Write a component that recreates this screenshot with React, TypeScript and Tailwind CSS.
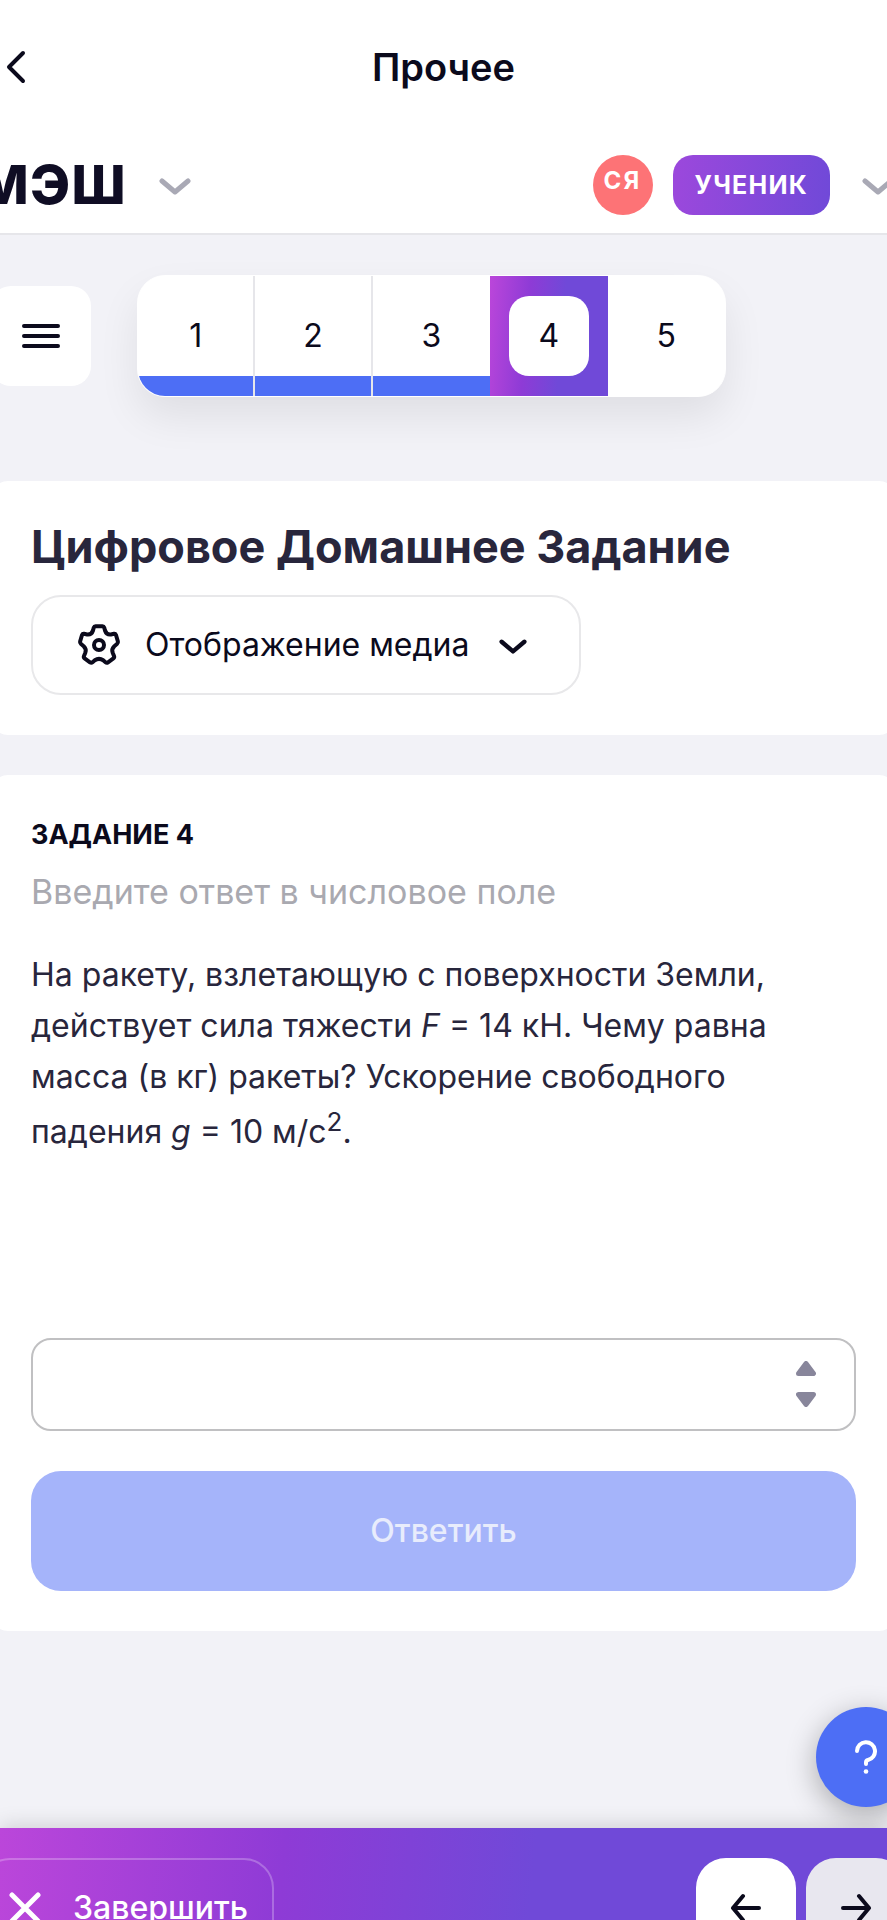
import React from "react"
import { clsx } from "clsx"

interface IconProps {
  className?: string
}

function ChevronDown({ className }: IconProps) {
  return (
    <svg viewBox="0 0 32 18" fill="none" className={className} aria-hidden="true">
      <path d="M3 3L16 14L29 3" stroke="currentColor" strokeWidth="5" strokeLinecap="round" strokeLinejoin="round" />
    </svg>
  )
}

function GearIcon({ className }: IconProps) {
  return (
    <svg viewBox="-22 -22 44 44" fill="none" stroke="currentColor" strokeLinejoin="round" className={className} aria-hidden="true">
      <path
        strokeWidth="4"
        d="M-3.500 -18.800H3.500Q4.800 -18.800 5.200 -17.500L6 -14.500Q7.500 -10 11.800 -10.500L15 -11.200Q16.400 -11.400 17 -10L18.900 -3.500Q19.200 -2 18.200 -1.200L15.300 1.200Q12.300 4 13.700 7.800L15 11Q15.600 12.400 14.400 13.300L9 17.300Q7.700 18.200 6.500 17.200L4.200 15.200Q0 12.500 -4.200 15.200L-6.500 17.200Q-7.700 18.200 -9 17.300L-14.400 13.300Q-15.600 12.400 -15 11L-13.700 7.800Q-12.300 4 -15.300 1.200L-18.200 -1.200Q-19.200 -2 -18.900 -3.500L-17 -10Q-16.400 -11.400 -15 -11.200L-11.800 -10.500Q-7.500 -10 -6 -14.500L-5.200 -17.500Q-4.800 -18.800 -3.500 -18.800Z"
      />
      <circle r="5" strokeWidth="4" />
    </svg>
  )
}

function ArrowIcon({ className }: IconProps) {
  return (
    <svg viewBox="0 0 32 30" fill="none" className={className} aria-hidden="true">
      <path d="M29 15H3M13 3L3 15L13 27" stroke="currentColor" strokeWidth="4" strokeLinecap="round" strokeLinejoin="round" />
    </svg>
  )
}

function StepIcon({ className }: IconProps) {
  return (
    <svg viewBox="0 0 20 15" className={className} aria-hidden="true">
      <path d="M10 2.500L17.500 12.500H2.500Z" fill="currentColor" stroke="currentColor" strokeWidth="5" strokeLinejoin="round" />
    </svg>
  )
}

function TopBar() {
  return (
    <div className="flex h-[133px] shrink-0 items-center bg-white">
      <button type="button" aria-label="Назад" className="flex w-8 justify-center">
        <svg viewBox="0 0 20 34" fill="none" className="h-[34px] w-5" aria-hidden="true">
          <path d="M17 3L3 17L17 31" stroke="currentColor" strokeWidth="4" strokeLinecap="round" strokeLinejoin="round" />
        </svg>
      </button>
      <h1 className="flex-1 text-center text-[38px] leading-[48px] font-semibold">Прочее</h1>
      <div className="w-8" />
    </div>
  )
}

function Header() {
  return (
    <header className="flex h-[102px] shrink-0 items-center justify-between border-b-2 border-[#e6e6ea] bg-white pt-1">
      <div className="flex items-center gap-8">
        <a
          href="#"
          className="flex w-[127px] justify-end text-[54px] leading-[60px] font-extrabold tracking-wide text-[#0f0d24]"
        >
          МЭШ
        </a>
        <button type="button" aria-label="Выбрать раздел" className="pt-1 text-[#a9a9b5]">
          <ChevronDown className="h-[18px] w-8" />
        </button>
      </div>
      <div className="-mr-2 flex items-center gap-5">
        <span className="flex size-[60px] justify-center rounded-full bg-[#fd7376] pt-2 text-2xl leading-9 font-bold tracking-widest text-white">
          СЯ
        </span>
        <span className="rounded-[20px] bg-linear-[95deg,#9c48dc,#7049d8] px-[22px] text-[25px] leading-[60px] font-bold tracking-wider text-white">
          УЧЕНИК
        </span>
        <button type="button" aria-label="Меню профиля" className="ml-3 pt-1 pr-px text-[#a9a9b5]">
          <ChevronDown className="h-[18px] w-8" />
        </button>
      </div>
    </header>
  )
}

const tasks = [
  { id: 1, done: true },
  { id: 2, done: true },
  { id: 3, done: true },
  { id: 4, done: false },
  { id: 5, done: false },
]

function TaskNav({ current }: { current: number }) {
  return (
    <div className="flex items-center gap-[46px] pt-10">
      <button
        type="button"
        aria-label="Список заданий"
        className="-ml-[9px] flex size-[100px] items-center justify-center rounded-[20px] bg-white"
      >
        <svg viewBox="0 0 38 26" fill="none" className="h-[26px] w-[38px]" aria-hidden="true">
          <path d="M2 3H36M2 13H36M2 23H36" stroke="#0b0a1c" strokeWidth="4" strokeLinecap="round" />
        </svg>
      </button>
      <nav className="grid w-[589px] grid-cols-5 overflow-hidden rounded-[28px] border border-white bg-white shadow-[0_20px_40px_rgba(0,0,0,0.08)]">
        {tasks.map(({ id, done }) => (
          <a
            key={id}
            href={`#task-${id}`}
            aria-current={id === current ? "step" : undefined}
            className={clsx(
              "flex h-[120px] flex-col text-center text-[32px] leading-[120px]",
              id === current && "items-center justify-center bg-linear-[95deg,#bb46da,#8e3bd6_32%,#7049d8_60%]",
              id < current - 1 && "border-r-2 border-[#e6e6ea]"
            )}
          >
            {id === current ? <span className="size-20 rounded-[20px] bg-white leading-20">{id}</span> : id}
            {done && <span className="-mt-5 h-5 bg-[#4d6ef5]" />}
          </a>
        ))}
      </nav>
    </div>
  )
}

function Card({ className, children }: React.PropsWithChildren & IconProps) {
  return <section className={clsx(className, "-mx-2 rounded-2xl bg-white px-[39px] py-10")}>{children}</section>
}

function AnswerForm() {
  return (
    <form className="mt-[181px]">
      <div className="flex h-[93px] items-center rounded-[20px] border-2 border-[#c0c0c2] pr-[38px]">
        <label htmlFor="answer" className="sr-only">
          Ответ
        </label>
        <input
          id="answer"
          type="text"
          inputMode="decimal"
          className="h-full min-w-0 flex-1 rounded-[20px] bg-transparent px-6 text-[32px] outline-none"
        />
        <div className="flex flex-col gap-4 text-[#88869b]">
          <button type="button" aria-label="Увеличить">
            <StepIcon className="block h-[15px] w-5" />
          </button>
          <button type="button" aria-label="Уменьшить">
            <StepIcon className="block h-[15px] w-5 rotate-180" />
          </button>
        </div>
      </div>
      <button
        type="submit"
        disabled
        className="mt-10 w-full rounded-[30px] bg-[#a5b4fa] text-[32px] leading-[120px] font-medium text-[#e8ecfc]"
      >
        Ответить
      </button>
    </form>
  )
}

function Footer() {
  return (
    <footer className="relative flex h-[92px] shrink-0 items-start justify-between overflow-hidden bg-linear-[95deg,#bb46da,#8e3bd6_32%,#7049d8_60%] pt-[30px] shadow-[0_-2px_20px_rgba(0,0,0,0.15)]">
      <button
        type="button"
        className="-ml-5 flex h-[100px] shrink-0 items-center gap-8 rounded-[30px] border-2 border-white/25 pr-6 pl-[27px] text-[32px] leading-10 font-medium text-white"
      >
        <svg viewBox="0 0 32 32" fill="none" className="size-8" aria-hidden="true">
          <path d="M3 3L29 29M29 3L3 29" stroke="currentColor" strokeWidth="5" strokeLinecap="round" />
        </svg>
        Завершить
      </button>
      <div className="-mr-[19px] flex gap-[10px]">
        <button
          type="button"
          aria-label="Предыдущее задание"
          className="flex size-[100px] items-center justify-center rounded-[30px] bg-white"
        >
          <ArrowIcon className="h-[30px] w-8" />
        </button>
        <button
          type="button"
          aria-label="Следующее задание"
          className="flex size-[100px] items-center justify-center rounded-[30px] bg-[#e8e7ef]"
        >
          <ArrowIcon className="h-[30px] w-8 rotate-180" />
        </button>
      </div>
    </footer>
  )
}

export default function App() {
  return (
    <div className="relative flex h-screen flex-col overflow-hidden bg-[#f2f2f7] font-['Inter','Noto_Sans',sans-serif] text-[#0b0a1c]">
      <TopBar />
      <Header />
      <main className="min-h-0 flex-1 overflow-x-hidden overflow-y-auto">
        <TaskNav current={4} />
        <Card className="mt-[84px]">
          <h2 className="text-[45px] leading-[52px] font-bold text-[#28263c]">Цифровое Домашнее Задание</h2>
          <button
            type="button"
            className="mt-[22px] flex h-[100px] items-center rounded-[30px] border-2 border-[#e8e8ea] pr-[52px] pl-11 text-[32px] leading-10"
          >
            <GearIcon className="size-[44px]" />
            <span className="ml-6">Отображение медиа</span>
            <ChevronDown className="mt-1 ml-[29px] h-4 w-7" />
          </button>
        </Card>
        <Card className="mt-10">
          <h3 className="text-[27px] leading-10 font-bold">ЗАДАНИЕ 4</h3>
          <p className="mt-[13px] text-[34px] leading-[48px] text-[#a9a9b0]">Введите ответ в числовое поле</p>
          <p className="mt-[33px] max-w-[760px] text-[32px] leading-[51px] text-[#28263c]">
            На ракету, взлетающую с поверхности Земли, действует сила тяжести <i>F</i> = 14 кН. Чему равна масса (в кг)
            ракеты? Ускорение свободного падения <i>g</i> = 10 м/с
            <sup className="static align-super text-[26px] leading-10">2</sup>.
          </p>
          <AnswerForm />
        </Card>
      </main>
      <button
        type="button"
        aria-label="Помощь"
        className="absolute -right-[29px] bottom-[113px] flex size-[100px] items-center justify-center rounded-full bg-[#4d6ef5] text-white shadow-[0_8px_30px_rgba(0,0,0,0.3)]"
      >
        <svg viewBox="0 0 22 34" fill="none" className="h-[34px] w-[22px]" aria-hidden="true">
          <path d="M2 11A9 9 0 1 1 13 20Q11 20.500 11 22.500V24" stroke="currentColor" strokeWidth="4" strokeLinecap="round" />
          <circle cx="11" cy="31.500" r="2.300" fill="currentColor" />
        </svg>
      </button>
      <Footer />
    </div>
  )
}
